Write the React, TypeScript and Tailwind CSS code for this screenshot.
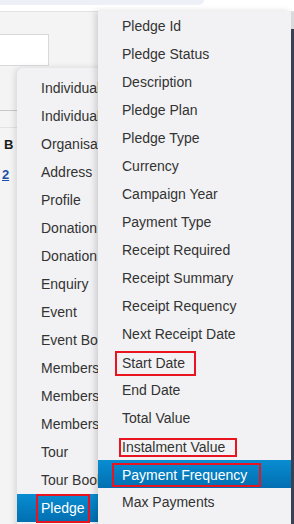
import React from "react";

const leftItems = [
  "Individual",
  "Individual",
  "Organisation",
  "Address",
  "Profile",
  "Donation",
  "Donation",
  "Enquiry",
  "Event",
  "Event Booking",
  "Membership",
  "Membership",
  "Membership",
  "Tour",
  "Tour Booking",
  "Pledge",
];

const rightItems = [
  "Pledge Id",
  "Pledge Status",
  "Description",
  "Pledge Plan",
  "Pledge Type",
  "Currency",
  "Campaign Year",
  "Payment Type",
  "Receipt Required",
  "Receipt Summary",
  "Receipt Requency",
  "Next Receipt Date",
  "Start Date",
  "End Date",
  "Total Value",
  "Instalment Value",
  "Payment Frequency",
  "Max Payments",
];

// red annotation boxes drawn around some labels
const boxed: Record<string, string> = {
  "Start Date": "-ml-[7px] pl-[5px] pr-[9px] h-[25px] mt-[2px]",
  "Instalment Value": "-ml-[3px] pl-[1px] pr-[10px] h-[19px] mt-[3px]",
  "Payment Frequency": "-ml-[10px] pl-[8px] pr-[12px] h-[24px] mt-[2px]",
  Pledge: "-ml-[5px] pl-[3px] pr-[3px] h-[29px] mt-0",
};

function MenuItem({ label, active }: { label: string; active?: boolean }) {
  const box = boxed[label];
  return (
    <div
      className={
        active
          ? "h-[28px] flex items-center pl-[24px] whitespace-nowrap text-white bg-gradient-to-b from-[#0a8dd2] to-[#026fb1]"
          : "h-[28px] flex items-center pl-[24px] whitespace-nowrap text-[#333333]"
      }
    >
      {box ? (
        <span className={"flex items-center border-2 border-[#e8141f] " + box}>{label}</span>
      ) : (
        label
      )}
    </div>
  );
}

export default function App() {
  return (
    <div className="relative w-[294px] h-[524px] overflow-hidden bg-white text-[14px] font-['Liberation_Sans',Arial,sans-serif]">
      {/* top bar */}
      <div className="h-[5px] w-[204px] bg-[#eef0f8] rounded-br-[14px]" />
      <div className="h-[6px]" />

      {/* page behind menus */}
      <div className="h-[513px] bg-[#f4f4f5] border-t border-[#e2e2e4] flex">
        <div className="flex flex-col">
          <div className="mt-[22px] w-[49px] h-[32px] bg-white border border-[#d9d9dc] border-l-0" />
          <div className="mt-[44px] w-[20px] border-t border-[#c9c9cc]" />
          <div className="mt-[16px] w-[20px] border-t border-[#e2e2e4]" />
          <div className="mt-[10px] pl-[4px] h-[14px] flex items-center font-bold text-[13px] text-[#1b1b1b]">B</div>
          <div className="mt-[16px] pl-[2px] h-[14px] flex items-center font-bold text-[13px] text-[#1d4fa8] underline">2</div>
        </div>
        <div className="flex-1" />
        {/* right edge strip */}
        <div className="w-[3px] flex flex-col">
          <div className="h-[17px] bg-[#dcdcdf]" />
          <div className="flex-1 bg-[#3b4254]" />
        </div>
      </div>

      {/* first level menu */}
      <div className="absolute left-[17px] top-[68px] w-[110px] h-[470px] bg-[#f2f2f4] rounded-tl-[6px] shadow-[-2px_0_6px_rgba(0,0,0,0.12)] pt-[6px]">
        {leftItems.map((l, i) => (
          <MenuItem key={i} label={l} active={l === "Pledge"} />
        ))}
      </div>

      {/* second level menu */}
      <div className="absolute left-[98px] top-[11px] w-[193px] h-[520px] bg-[#f2f2f4] shadow-[-3px_0_6px_rgba(0,0,0,0.14)] pt-[1px]">
        {rightItems.map((l) => (
          <MenuItem key={l} label={l} active={l === "Payment Frequency"} />
        ))}
      </div>
    </div>
  );
}
